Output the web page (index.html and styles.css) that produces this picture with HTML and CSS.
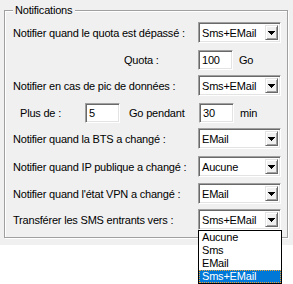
FILE: index.html
```html
<!DOCTYPE html>
<html lang="fr">
<head>
<meta charset="utf-8">
<title>Notifications</title>
<link rel="stylesheet" href="styles.css">
</head>
<body>
<div class="panel">
  <fieldset class="group">
    <legend>Notifications</legend>
    <div class="rows">
      <div class="row">
        <span class="label">Notifier quand le quota est dépassé :</span>
        <div class="combo"><span class="value">Sms+EMail</span><span class="btn"><svg width="7" height="4" viewBox="0 0 7 4"><rect x="0" y="0" width="7" height="1"/><rect x="1" y="1" width="5" height="1"/><rect x="2" y="2" width="3" height="1"/><rect x="3" y="3" width="1" height="1"/></svg></span></div>
      </div>
      <div class="row">
        <span class="label label-quota">Quota :</span>
        <div class="input">100</div>
        <span class="unit">Go</span>
      </div>
      <div class="row">
        <span class="label">Notifier en cas de pic de données :</span>
        <div class="combo"><span class="value">Sms+EMail</span><span class="btn"><svg width="7" height="4" viewBox="0 0 7 4"><rect x="0" y="0" width="7" height="1"/><rect x="1" y="1" width="5" height="1"/><rect x="2" y="2" width="3" height="1"/><rect x="3" y="3" width="1" height="1"/></svg></span></div>
      </div>
      <div class="row">
        <span class="label-plus">Plus de :</span>
        <div class="input">5</div>
        <span class="mid">Go pendant</span>
        <div class="input">30</div>
        <span class="unit">min</span>
      </div>
      <div class="row">
        <span class="label">Notifier quand la BTS a changé :</span>
        <div class="combo"><span class="value">EMail</span><span class="btn"><svg width="7" height="4" viewBox="0 0 7 4"><rect x="0" y="0" width="7" height="1"/><rect x="1" y="1" width="5" height="1"/><rect x="2" y="2" width="3" height="1"/><rect x="3" y="3" width="1" height="1"/></svg></span></div>
      </div>
      <div class="row">
        <span class="label">Notifier quand IP publique a changé :</span>
        <div class="combo"><span class="value">Aucune</span><span class="btn"><svg width="7" height="4" viewBox="0 0 7 4"><rect x="0" y="0" width="7" height="1"/><rect x="1" y="1" width="5" height="1"/><rect x="2" y="2" width="3" height="1"/><rect x="3" y="3" width="1" height="1"/></svg></span></div>
      </div>
      <div class="row">
        <span class="label">Notifier quand l'état VPN a changé :</span>
        <div class="combo"><span class="value">EMail</span><span class="btn"><svg width="7" height="4" viewBox="0 0 7 4"><rect x="0" y="0" width="7" height="1"/><rect x="1" y="1" width="5" height="1"/><rect x="2" y="2" width="3" height="1"/><rect x="3" y="3" width="1" height="1"/></svg></span></div>
      </div>
      <div class="row">
        <span class="label">Transférer les SMS entrants vers :</span>
        <div class="combo"><span class="value">Sms+EMail</span><span class="btn"><svg width="7" height="4" viewBox="0 0 7 4"><rect x="0" y="0" width="7" height="1"/><rect x="1" y="1" width="5" height="1"/><rect x="2" y="2" width="3" height="1"/><rect x="3" y="3" width="1" height="1"/></svg></span>
          <div class="list">
            <div class="item">Aucune</div>
            <div class="item">Sms</div>
            <div class="item">EMail</div>
            <div class="item sel">Sms+EMail</div>
          </div>
        </div>
      </div>
    </div>
  </fieldset>
</div>
</body>
</html>
```
FILE: styles.css
```css
* { box-sizing: border-box; }
html, body { margin: 0; padding: 0; background: #fff; }
body {
  font-family: "Liberation Sans", Arial, sans-serif;
  font-size: 11px;
  letter-spacing: -0.2px;
  color: #000;
  height: 284px;
}
.panel {
  background: #f0f0f0;
  height: 245px;
  padding: 4px 0 0 4px;
}
.group {
  margin: 0;
  min-width: 0;
  width: 284px;
  padding: 5px 0 7px 8px;
  border: 1px solid #a0a0a0;
  box-shadow: inset 1px 1px #fff, 1px 1px #fff;
}
.group legend {
  padding: 0 3px 0 2px;
  line-height: 13px;
  background: #f0f0f0;
}
.rows {
  display: grid;
  grid-template-rows: 27px 26px 27px 26px 28px 27px 26px 21px;
  align-items: start;
}
.row {
  display: flex;
  align-items: center;
  height: 21px;
}
.label {
  width: 185px;
  white-space: nowrap;
}
.label-quota { padding-left: 111px; }
.label-plus { width: 72px; padding-left: 7px; white-space: nowrap; }
.mid { width: 79px; padding-left: 9px; white-space: nowrap; }
.unit { padding-left: 6px; }
.combo {
  position: relative;
  width: 83px;
  height: 21px;
  background: #fff;
  border: 1px solid;
  border-color: #a0a0a0 #fff #fff #a0a0a0;
  box-shadow: inset 1px 1px #696969, inset -1px -1px #e3e3e3;
  display: flex;
  align-items: center;
  padding-left: 3px;
}
.value { flex: 1; white-space: nowrap; }
.btn {
  width: 13px;
  height: 15px;
  margin-right: 2px;
  background: #f0f0f0;
  border: 1px solid;
  border-color: #e3e3e3 #696969 #696969 #e3e3e3;
  box-shadow: inset 1px 1px #fff, inset -1px -1px #a0a0a0;
  display: flex;
  align-items: center;
  justify-content: center;
}
.btn svg { display: block; fill: #000; shape-rendering: crispEdges; }
.input {
  width: 35px;
  height: 20px;
  line-height: 18px;
  background: #fff;
  border: 1px solid;
  border-color: #a0a0a0 #fff #fff #a0a0a0;
  box-shadow: inset 1px 1px #696969, inset -1px -1px #e3e3e3;
  padding-left: 3px;
}
.list {
  position: absolute;
  left: -1px;
  top: 20px;
  width: 84px;
  background: #fff;
  border: 1px solid #000;
  z-index: 2;
}
.item {
  height: 13px;
  line-height: 13px;
  padding-left: 3px;
  white-space: nowrap;
}
.item.sel {
  background: #0078d7;
  color: #fff;
  outline: 1px dotted #f0a030;
  outline-offset: -1px;
}
```
